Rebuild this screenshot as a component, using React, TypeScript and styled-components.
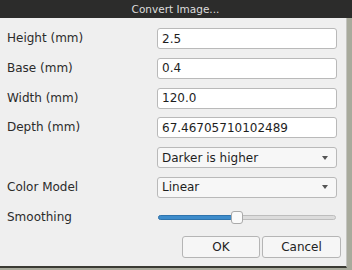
import React from 'react';
import styled, { createGlobalStyle } from 'styled-components';

const Global = createGlobalStyle`
  html, body {
    margin: 0;
    padding: 0;
    background: #a8aa9c;
    overflow: hidden;
  }
  * { box-sizing: border-box; }
`;

const Screen = styled.div`
  width: 352px;
  height: 270px;
  display: flex;
  flex-direction: column;
  font-family: 'DejaVu Sans', sans-serif;
`;

const TitleBar = styled.div`
  height: 18px;
  background: #2c2c2b;
  color: #dcdcdc;
  font-size: 10.5px;
  display: flex;
  align-items: center;
  justify-content: center;
  padding-right: 1px;
`;

const Dialog = styled.div`
  width: 347px;
  height: 250px;
  background: #efefef;
  border-right: 1px solid #c4c4c0;
  border-bottom: 2px solid #3a3a33;
  padding: 10px 0 0 7px;
`;

const Form = styled.div`
  display: grid;
  grid-template-columns: 150px 180px;
  grid-auto-rows: 21px;
  row-gap: 8.8px;
  align-items: center;
`;

const Label = styled.div`
  font-size: 12px;
  color: #2b2b2b;
  padding-bottom: 1px;
`;

const Field = styled.div`
  height: 21px;
  background: #fff;
  border: 1px solid #b9b9b9;
  border-radius: 3px;
  font-size: 12px;
  color: #1e1e1e;
  padding-left: 4px;
  display: flex;
  align-items: center;
`;

const Combo = styled(Field)`
  background: #f7f7f7;
  justify-content: space-between;
  padding-right: 8px;
`;

const Arrow = styled.span`
  width: 0;
  height: 0;
  border-left: 3.5px solid transparent;
  border-right: 3.5px solid transparent;
  border-top: 4px solid #555;
`;

const Slider = styled.div`
  position: relative;
  height: 21px;
  margin-left: 1px;
  margin-right: 1px;
`;

const Groove = styled.div`
  position: absolute;
  left: 0;
  right: 0;
  top: 8px;
  height: 5px;
  border-radius: 3px;
  background: #dcdcdc;
  border: 1px solid #bdbdbd;
`;

const Fill = styled.div`
  position: absolute;
  left: 0;
  top: 8px;
  height: 5px;
  border-radius: 3px;
  background: #3d8ccb;
  border: 1px solid #2f74ad;
`;

const Handle = styled.div`
  position: absolute;
  top: 4px;
  width: 12px;
  height: 13px;
  border-radius: 3px;
  background: #fafafa;
  border: 1px solid #aaa;
`;

const Buttons = styled.div`
  grid-column: 1 / span 2;
  display: flex;
  justify-content: flex-end;
  gap: 2px;
  margin-right: -4px;
`;

const Button = styled.button<{ $w: number }>`
  width: ${(p) => p.$w}px;
  height: 22px;
  background: #f6f6f6;
  border: 1px solid #b5b5b5;
  border-radius: 3px;
  font-family: 'DejaVu Sans', sans-serif;
  font-size: 12px;
  color: #222;
  padding: 0;
`;

export default function App() {
  const value = 0.42;
  return (
    <Screen>
      <Global />
      <TitleBar>Convert Image...</TitleBar>
      <Dialog>
        <Form>
          <Label>Height (mm)</Label>
          <Field>2.5</Field>
          <Label>Base (mm)</Label>
          <Field>0.4</Field>
          <Label>Width (mm)</Label>
          <Field>120.0</Field>
          <Label>Depth (mm)</Label>
          <Field>67.46705710102489</Field>
          <div />
          <Combo>
            Darker is higher
            <Arrow />
          </Combo>
          <Label>Color Model</Label>
          <Combo>
            Linear
            <Arrow />
          </Combo>
          <Label>Smoothing</Label>
          <Slider>
            <Groove />
            <Fill style={{ width: `${value * 100}%` }} />
            <Handle style={{ left: `calc(${value * 100}% - 2px)` }} />
          </Slider>
          <Buttons>
            <Button $w={78}>OK</Button>
            <Button $w={79}>Cancel</Button>
          </Buttons>
        </Form>
      </Dialog>
    </Screen>
  );
}
